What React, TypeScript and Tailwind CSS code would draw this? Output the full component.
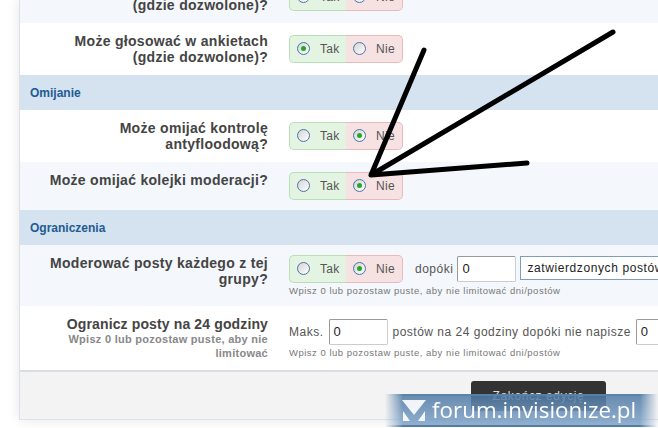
function Radio({ on }: { on?: boolean }) {
  return (
    <span className="-mt-[2px] flex h-[13px] w-[13px] shrink-0 items-center justify-center rounded-full border border-[#4a76a3] bg-gradient-to-br from-[#d4d4d4] to-white">
      {on && <span className="h-[5px] w-[5px] rounded-full bg-[#22a82c]" />}
    </span>
  );
}

function YesNo({ yes }: { yes?: boolean }) {
  return (
    <div className="flex h-[28px] w-[114px] shrink-0 text-[12px] tracking-[0.3px] text-[#555]">
      <div className="flex w-[57px] items-center gap-[10px] rounded-l-[5px] border border-r-0 border-[#b7e0b7] bg-[#e3f4e3] pl-[7px]">
        <Radio on={yes} />
        <span>Tak</span>
      </div>
      <div className="flex w-[57px] items-center gap-[10px] rounded-r-[5px] border border-l-0 border-[#eab9b9] bg-[#f6e2e2] pl-[7px]">
        <Radio on={!yes} />
        <span>Nie</span>
      </div>
    </div>
  );
}

function Label({ children }: { children: React.ReactNode }) {
  return (
    <div className="w-[248px] shrink-0 text-right text-[14px] leading-[16px] font-bold tracking-[0.3px] text-[#444]">
      {children}
    </div>
  );
}

function Row({ label, yes, alt, two }: { label: React.ReactNode; yes?: boolean; alt?: boolean; two?: boolean }) {
  return (
    <div className={`flex gap-[21px] py-[10px] ${alt ? "bg-[#f4f7fb]" : "bg-white"}`}>
      <Label>{label}</Label>
      <div className={two ? "mt-[2px]" : ""}>
        <YesNo yes={yes} />
      </div>
    </div>
  );
}

function Header({ children }: { children: React.ReactNode }) {
  return (
    <div className="flex h-[35px] items-center bg-[#d5e2f0] pl-[10px] text-[12px] font-bold text-[#1d5c90]">
      {children}
    </div>
  );
}

function Hint() {
  return (
    <div className="mt-[2px] text-[9.5px] leading-[12px] tracking-[0.5px] whitespace-nowrap text-[#777]">
      Wpisz 0 lub pozostaw puste, aby nie limitować dni/postów
    </div>
  );
}

function NumInput({ w }: { w: string }) {
  return (
    <div className={`flex h-[26px] shrink-0 items-center rounded-[2px] border border-t-[#999] border-r-[#ccc] border-b-[#ccc] border-l-[#999] bg-white pl-[4px] text-[13px] tracking-[0.5px] text-[#222] ${w}`}>
      0
    </div>
  );
}

export default function App() {
  return (
    <div className="relative h-[428px] w-[658px] overflow-hidden bg-white font-['Liberation_Sans',sans-serif]">
      <div className="ml-[19px] w-[800px] border border-[#dbe3ea] shadow-[0_0_12px_rgba(0,0,0,0.1)]">
        <div className="-mt-[30px]">
          <Row alt yes two label={<>Może głosować w ankietach<br />(gdzie dozwolone)?</>} />
        </div>
        <Row yes two label={<>Może głosować w ankietach<br />(gdzie dozwolone)?</>} />
        <Header>Omijanie</Header>
        <Row two label={<>Może omijać kontrolę<br />antyfloodową?</>} />
        <Row alt label="Może omijać kolejki moderacji?" />
        <Header>Ograniczenia</Header>
        <div className="flex h-[61px] gap-[21px] bg-[#f4f7fb] pt-[10px]">
          <Label>Moderować posty każdego z tej<br />grupy?</Label>
          <div>
            <div className="flex items-center">
              <YesNo />
              <span className="ml-[12px] text-[12px] tracking-[0.5px] text-[#555]">dopóki</span>
              <div className="ml-[4px]"><NumInput w="w-[59px]" /></div>
              <div className="mb-[2px] ml-[4px] flex h-[24px] w-[240px] items-center border border-[#7f9db9] bg-white pl-[6px] text-[12px] tracking-[0.6px] whitespace-nowrap text-[#222]">
                zatwierdzonych postów
              </div>
            </div>
            <Hint />
          </div>
        </div>
        <div className="flex h-[64px] gap-[21px] bg-white pt-[10px]">
          <div className="w-[248px] shrink-0 text-right">
            <div className="text-[14px] leading-[16px] font-bold tracking-[0.13px] text-[#444]">Ogranicz posty na 24 godziny</div>
            <div className="text-[11px] leading-[14px] font-bold tracking-[0.27px] text-[#888]">Wpisz 0 lub pozostaw puste, aby nie<br />limitować</div>
          </div>
          <div className="pt-[3px]">
            <div className="flex items-center text-[12px] tracking-[0.5px] text-[#555]">
              <span>Maks.</span>
              <div className="mx-[5px]"><NumInput w="w-[59px]" /></div>
              <span className="whitespace-nowrap">postów na 24 godziny dopóki nie napisze</span>
              <div className="ml-[5px]"><NumInput w="w-[59px]" /></div>
            </div>
            <Hint />
          </div>
        </div>
        <div className="flex h-[49px] justify-start border-t-2 border-[#d9dde2] bg-[#f3f3f3] pt-[9px] pl-[451px]">
          <div className="flex h-[30px] w-[135px] items-center justify-center rounded-[3px] bg-[#333] text-[12px] tracking-[0.6px] text-[#ddd]">
            Zakończ edycję
          </div>
        </div>
      </div>

      {/* hand drawn arrow */}
      <svg className="absolute top-0 left-0" width="658" height="428" fill="none">
        <path d="M424 50 L371 175 L613 32 M371 175 L527 163" stroke="#000" strokeWidth="5" strokeLinecap="round" strokeLinejoin="round" />
      </svg>

      {/* watermark */}
      <div className="absolute top-[394px] left-[385px] flex h-[33px] w-[273px] items-center border-y-2 border-[#4f79a3]/80 bg-gradient-to-b from-[#4f79a3]/85 to-[#85a7cb]/90 pl-[17px] [mask-image:linear-gradient(to_right,transparent,black_18px,black_255px,transparent)]">
        <svg width="24" height="22" viewBox="0 0 24 22" className="shrink-0">
          <path d="M0 0 H24 L12 15 Z M1 11 L8 21 H1 Z M23 11 V21 H16 Z" fill="#fff" opacity="0.9" />
        </svg>
        <span className="ml-[6px] font-['Open_Sans',sans-serif] text-[22.4px] leading-none whitespace-nowrap text-white">forum.invisionize.pl</span>
      </div>
    </div>
  );
}
